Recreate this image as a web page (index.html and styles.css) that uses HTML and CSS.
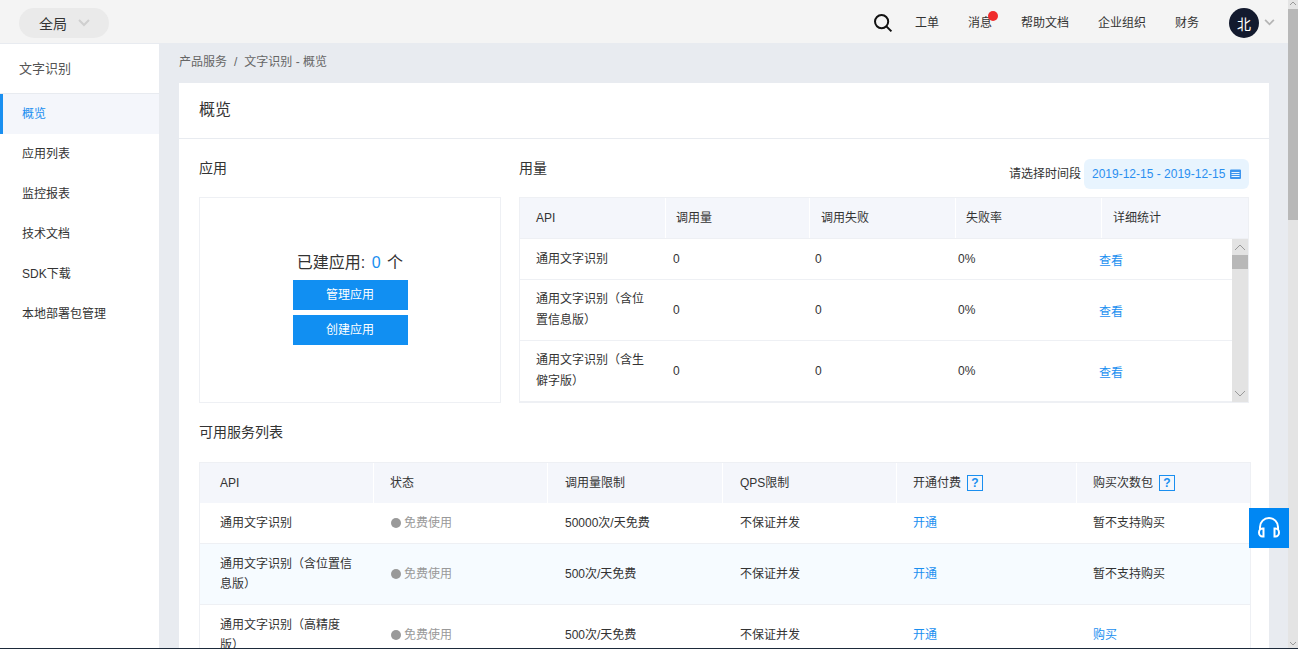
FILE: index.html
```html
<!DOCTYPE html>
<html lang="zh">
<head>
<meta charset="utf-8">
<title>文字识别 - 概览</title>
<link rel="stylesheet" href="styles.css">
</head>
<body>
<div class="screen">
  <div class="page">
    <header class="topbar">
      <div class="scope"><span>全局</span>
        <svg class="chev chev-scope" viewBox="0 0 12 8"><path d="M1 1l5 5 5-5"/></svg>
      </div>
      <nav class="topnav">
        <svg class="search" viewBox="0 0 20 20"><circle cx="8.6" cy="8.6" r="6.6"/><path d="M13.4 13.4l5 5"/></svg>
        <a class="n1">工单</a>
        <a class="n2 msg">消息<i class="dot"></i></a>
        <a class="n3">帮助文档</a>
        <a class="n4">企业组织</a>
        <a class="n5">财务</a>
        <span class="avatar">北</span>
        <svg class="chev chev-user" viewBox="0 0 12 8"><path d="M1 1l5 5 5-5"/></svg>
      </nav>
    </header>
    <div class="body">
      <aside class="side">
        <div class="side-title">文字识别</div>
        <ul class="menu">
          <li class="active">概览</li>
          <li>应用列表</li>
          <li>监控报表</li>
          <li>技术文档</li>
          <li>SDK下载</li>
          <li>本地部署包管理</li>
        </ul>
      </aside>
      <main class="content">
        <div class="crumb">产品服务<span class="sep">/</span>文字识别 - 概览</div>
        <section class="card">
          <h1 class="card-title">概览</h1>
          <div class="card-body">
            <div class="top-row">
              <div class="apps">
                <h2 class="sec sec-apps">应用</h2>
                <div class="apps-box">
                  <p class="apps-count">已建应用: <b>0</b> 个</p>
                  <a class="btn">管理应用</a>
                  <a class="btn">创建应用</a>
                </div>
              </div>
              <div class="usage">
                <div class="usage-head">
                  <h2 class="sec">用量</h2>
                  <div class="range"><span>请选择时间段</span>
                    <div class="range-pill">2019-12-15 - 2019-12-15
                      <svg class="cal" viewBox="0 0 11 10"><path class="cal-bg" d="M0 1.5A1 1 0 0 1 1 .5h9a1 1 0 0 1 1 1V9a1 1 0 0 1-1 1H1a1 1 0 0 1-1-1z"/><path class="cal-ln" d="M1.5 3.5h8M1.5 5.5h8M1.5 7.5h8"/></svg>
                    </div>
                  </div>
                </div>
                <div class="usage-table">
                  <div class="uhead">
                    <div>API</div><div>调用量</div><div>调用失败</div><div>失败率</div><div>详细统计</div>
                  </div>
                  <div class="ubody">
                    <div class="urows">
                      <div class="urow"><div>通用文字识别</div><div>0</div><div>0</div><div>0%</div><div><a class="link">查看</a></div></div>
                      <div class="urow"><div>通用文字识别（含位置信息版）</div><div>0</div><div>0</div><div>0%</div><div><a class="link">查看</a></div></div>
                      <div class="urow"><div>通用文字识别（含生僻字版）</div><div>0</div><div>0</div><div>0%</div><div><a class="link">查看</a></div></div>
                    </div>
                    <div class="uscroll">
                      <svg viewBox="0 0 16 16"><path d="M3 11l5-5 5 5"/></svg>
                      <i class="uthumb"></i>
                      <svg class="udown" viewBox="0 0 16 16"><path d="M3 5l5 5 5-5"/></svg>
                    </div>
                  </div>
                </div>
              </div>
            </div>
            <h2 class="sec sec-svc">可用服务列表</h2>
            <div class="svc">
              <div class="srow shead">
                <div>API</div><div>状态</div><div>调用量限制</div><div>QPS限制</div>
                <div>开通付费<span class="help">?</span></div>
                <div>购买次数包<span class="help">?</span></div>
              </div>
              <div class="srow s1">
                <div>通用文字识别</div><div class="state"><i></i>免费使用</div><div>50000次/天免费</div><div>不保证并发</div><div><a class="link">开通</a></div><div>暂不支持购买</div>
              </div>
              <div class="srow s2 tint">
                <div>通用文字识别（含位置信息版）</div><div class="state"><i></i>免费使用</div><div>500次/天免费</div><div>不保证并发</div><div><a class="link">开通</a></div><div>暂不支持购买</div>
              </div>
              <div class="srow s2">
                <div>通用文字识别（高精度版）</div><div class="state"><i></i>免费使用</div><div>500次/天免费</div><div>不保证并发</div><div><a class="link">开通</a></div><div><a class="link">购买</a></div>
              </div>
            </div>
          </div>
        </section>
      </main>
    </div>
    <a class="support" aria-label="客服">
      <svg viewBox="0 0 26 22"><path d="M4 13V10a9 9 0 0 1 18 0v3"/><path d="M7.5 11.5v8h-1a3.5 4 0 0 1 0-8zM18.5 11.5v8h1a3.5 4 0 0 0 0-8z"/></svg>
    </a>
  </div>
  <div class="vscroll">
    <svg class="varrow" viewBox="0 0 10 9"><path d="M2 5l3-3 3 3"/></svg>
    <i class="vthumb"></i>
    <svg class="varrow vdown" viewBox="0 0 10 9"><path d="M2 3l3 3 3-3"/></svg>
  </div>
</div>
<div class="edge"></div>
</body>
</html>
```

FILE: styles.css
```css
* { box-sizing: border-box; }
html, body { margin: 0; height: 100%; overflow: hidden; }
body {
  font-family: "Liberation Sans", "Noto Sans CJK SC", sans-serif;
  font-size: 12px;
  color: #333;
  display: flex;
  flex-direction: column;
  background: #fff;
}
h1, h2, p, ul { margin: 0; padding: 0; font-weight: 400; }
ul { list-style: none; }
i { display: block; }

.screen { flex: 1; min-height: 0; display: flex; overflow: hidden; }
.edge { height: 1px; background: #1d2a3a; }
.page { flex: 1; min-width: 0; position: relative; display: flex; flex-direction: column; }

.topbar {
  height: 43px; flex: none; background: #f4f4f4;
  display: flex; justify-content: space-between; align-items: center;
  padding: 0 19px;
}
.scope {
  width: 90px; height: 30px; margin-top: 2px; border-radius: 15px; background: #eaeaea;
  display: flex; align-items: center; padding-left: 20px; gap: 11px;
  font-size: 14px;
}
.chev { fill: none; stroke: #cfcfcf; stroke-width: 2; }
.chev-scope { width: 12px; height: 8px; }
.chev-user { width: 11px; height: 7px; stroke: #b5b5b5; margin-left: 5px; }

.topnav { display: flex; align-items: center; color: #333; margin-right: -6px; padding-top: 2px; }
.search { width: 20px; height: 20px; fill: none; stroke: #111; stroke-width: 2; margin-right: 22px; }
.topnav a { display: block; line-height: 18px; }
.n1 { margin-right: 29px; }
.n2 { margin-right: 29px; }
.n3 { margin-right: 29px; }
.n4 { margin-right: 29px; }
.n5 { margin-right: 30px; }
.msg { position: relative; }
.dot { position: absolute; left: 20px; top: -3px; width: 10px; height: 10px; border-radius: 50%; background: #f02b2b; }
.avatar {
  width: 30px; height: 30px; border-radius: 50%; background: #131a2e; color: #fff;
  display: flex; align-items: center; justify-content: center; font-size: 14px;
}

.body { flex: 1; min-height: 0; display: flex; }
.side { width: 159px; flex: none; background: #fff; border-top: 1px solid #e8ebf0; }
.side-title { height: 50px; padding: 15px 0 0 19px; line-height: 19px; font-size: 13px; color: #555; border-bottom: 1px solid #e8ebf0; }
.menu li { height: 40px; line-height: 40px; padding-left: 22px; }
.menu .active { color: #1a8ff0; background: #f4f6fb; border-left: 3px solid #1a8ff0; padding-left: 19px; }

.content { flex: 1; min-width: 0; background: #e8ebf0; padding: 0 19px 0 20px; }
.crumb { height: 40px; line-height: 38px; color: #666; }
.sep { margin: 0 7px; }
.card { background: #fff; }
.card-title { height: 56px; line-height: 54px; padding-left: 20px; font-size: 16px; border-bottom: 1px solid #e8ebf0; }
.card-body { padding: 0 18px 0 20px; }

.top-row { display: flex; gap: 18px; }
.apps { width: 302px; flex: none; }
.usage { width: 730px; flex: none; }
.sec { font-size: 14px; line-height: 20px; }
.sec-apps { padding-top: 19px; height: 58px; }
.apps-box {
  height: 206px; border: 1px solid #eef0f4; display: flex; flex-direction: column; align-items: center;
  padding-top: 54px;
}
.apps-count { font-size: 16px; line-height: 22px; margin-bottom: 6px; }
.apps-count b { font-weight: 400; color: #1a8ff0; margin: 0 2px; }
.btn {
  display: block; width: 115px; height: 30px; margin-bottom: 5px; line-height: 30px; text-align: center;
  background: #118ff2; color: #fff;
}

.usage-head { height: 58px; display: flex; justify-content: space-between; }
.usage-head .sec { padding-top: 19px; }
.range { display: flex; align-items: flex-start; padding-top: 20px; gap: 3px; }
.range span { line-height: 30px; }
.range-pill {
  width: 165px; height: 30px; border-radius: 6px; background: #e8f4fe; color: #2b8ff0;
  display: flex; align-items: center; justify-content: space-between; padding: 0 8px; white-space: nowrap;
}
.cal { width: 11px; height: 10px; }
.cal-bg { fill: #3d95ee; }
.cal-ln { stroke: #e8f4fe; stroke-width: 1; fill: none; }

.usage-table { height: 206px; border: 1px solid #eef0f4; border-right-width: 1px; overflow: hidden; }
.uhead { display: grid; grid-template-columns: 146px 144px 146px 146px 146px; height: 40px; background: #f4f6fb; }
.uhead div { line-height: 40px; padding-left: 16px; border-right: 1px solid #fff; }
.uhead div:nth-child(2) { padding-left: 10px; }
.uhead div:nth-child(3) { padding-left: 11px; }
.uhead div:nth-child(4) { padding-left: 10px; }
.uhead div:nth-child(5) { padding-left: 11px; border-right: 0; }
.ubody { display: flex; border-top: 1px solid #eef0f4; height: 164px; }
.urows { width: 712px; flex: none; }
.urow { display: grid; grid-template-columns: 145px 142px 143px 142px 140px; align-items: center; height: 61px; border-bottom: 1px solid #eef0f4; }
.urow:first-child { height: 41px; }
.urow div:first-child { padding: 0 16px; line-height: 21px; }
.urow div:nth-child(2) { padding-left: 8px; }
.urow div:nth-child(3) { padding-left: 8px; }
.urow div:nth-child(4) { padding-left: 8px; }
.urow div:nth-child(5) { padding-left: 7px; }
.link { color: #1a8ff0; }
.uscroll { flex: 1; background: #e3e3e3; display: flex; flex-direction: column; }
.uscroll svg { width: 16px; height: 16px; flex: none; fill: none; stroke: #9a9a9a; stroke-width: 1; }
.uthumb { height: 14px; background: #b8b8b8; }
.udown { margin-top: auto; }

.sec-svc { padding-top: 19px; height: 59px; }
.svc { width: 1052px; border-top: 1px solid #eef0f4; border-right: 1px solid #eef0f4; border-left: 1px solid #eef0f4; }
.srow { display: grid; grid-template-columns: 174px 174px 175px 174px 180px 174px; align-items: center; border-bottom: 1px solid #eef0f4; }
.srow > div { padding-left: 16px; line-height: 20px; }
.srow > div:first-child { padding-left: 20px; padding-right: 16px; }
.srow > div:nth-child(3), .srow > div:nth-child(4) { padding-left: 17px; }
.srow > div:nth-child(5), .srow > div:nth-child(6) { padding-left: 16px; }
.shead { height: 40px; background: #f4f6fb; border-bottom: 0; }
.shead > div { height: 40px; line-height: 40px; border-right: 1px solid #fff; display: flex; align-items: center; }
.shead > div:last-child { border-right: 0; }
.shead > div:nth-child(2) { padding-left: 16px; }
.s1 { height: 41px; }
.s2 { height: 61px; }
.tint { background: #f6fbff; }
.state { color: #999; display: flex; align-items: center; padding-left: 17px !important; }
.state i { width: 10px; height: 10px; border-radius: 50%; background: #999; margin-right: 3px; }
.help {
  display: inline-block; width: 16px; height: 16px; margin-left: 6px; border: 1px solid #1a8ff0; color: #1a8ff0;
  line-height: 14px; text-align: center; font-weight: 700;
}

.support {
  position: absolute; left: 1249px; top: 508px; width: 40px; height: 40px; background: #0087f3;
  display: flex; align-items: center; justify-content: center;
}
.support svg { width: 26px; height: 22px; fill: none; stroke: #fff; stroke-width: 2; }

.vscroll { width: 10px; flex: none; background: #e4e4e4; display: flex; flex-direction: column; }
.varrow { width: 10px; height: 9px; flex: none; fill: none; stroke: #999; stroke-width: 1; }
.vthumb { height: 211px; background: #b8b8b8; }
.vdown { margin-top: auto; }
```
